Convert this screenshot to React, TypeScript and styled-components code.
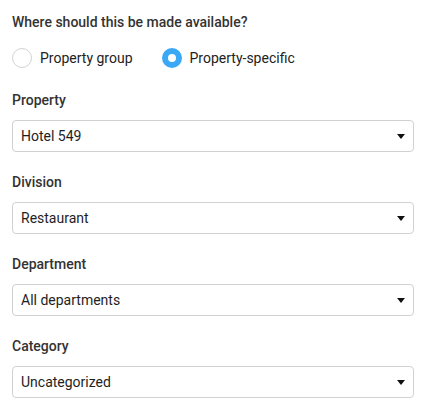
import React from "react";
import styled, { createGlobalStyle } from "styled-components";

const GlobalStyle = createGlobalStyle`
  html, body { margin: 0; padding: 0; background: #fff; }
  body { font-family: Roboto, "Liberation Sans", Arial, sans-serif; }
`;

const Page = styled.div`
  padding: 12px 22px 0 12px;
  width: 436px;
  box-sizing: border-box;
`;

const Heading = styled.div`
  font-size: 14px;
  line-height: 20px;
  font-weight: 500;
  color: #333;
  margin-bottom: 16px;
`;

const RadioRow = styled.div`
  display: flex;
  align-items: center;
  height: 20px;
  margin-bottom: 22px;
`;

const RadioItem = styled.label`
  display: flex;
  align-items: center;
  gap: 8px;
  margin-right: 29px;
  font-size: 14px;
  line-height: 20px;
  color: #222;
  cursor: pointer;
`;

const RadioCircle = styled.span<{ $checked?: boolean }>`
  box-sizing: border-box;
  width: 20px;
  height: 20px;
  border-radius: 50%;
  background: #fff;
  border: ${(p) => (p.$checked ? "6.5px solid #3aa8f4" : "1px solid #d3d3d3")};
`;

const Field = styled.div`
  margin-bottom: 20px;
`;

const FieldLabel = styled.div`
  font-size: 14px;
  line-height: 20px;
  font-weight: 500;
  color: #333;
  margin-bottom: 10px;
`;

const Select = styled.div`
  box-sizing: border-box;
  height: 32px;
  width: 402px;
  border: 1px solid #d1d1d1;
  border-radius: 4px;
  display: flex;
  align-items: center;
  justify-content: space-between;
  padding: 0 8px 0 8px;
  font-size: 14px;
  color: #1e1e1e;
`;

const Caret = styled.span`
  width: 0;
  height: 0;
  border-left: 4px solid transparent;
  border-right: 4px solid transparent;
  border-top: 5px solid #111;
`;

const fields = [
  { label: "Property", value: "Hotel 549" },
  { label: "Division", value: "Restaurant" },
  { label: "Department", value: "All departments" },
  { label: "Category", value: "Uncategorized" },
];

export default function App() {
  return (
    <>
      <GlobalStyle />
      <Page>
        <Heading>Where should this be made available?</Heading>
        <RadioRow>
          <RadioItem>
            <RadioCircle />
            Property group
          </RadioItem>
          <RadioItem>
            <RadioCircle $checked />
            Property-specific
          </RadioItem>
        </RadioRow>
        {fields.map((f) => (
          <Field key={f.label}>
            <FieldLabel>{f.label}</FieldLabel>
            <Select>
              <span>{f.value}</span>
              <Caret />
            </Select>
          </Field>
        ))}
      </Page>
    </>
  );
}
